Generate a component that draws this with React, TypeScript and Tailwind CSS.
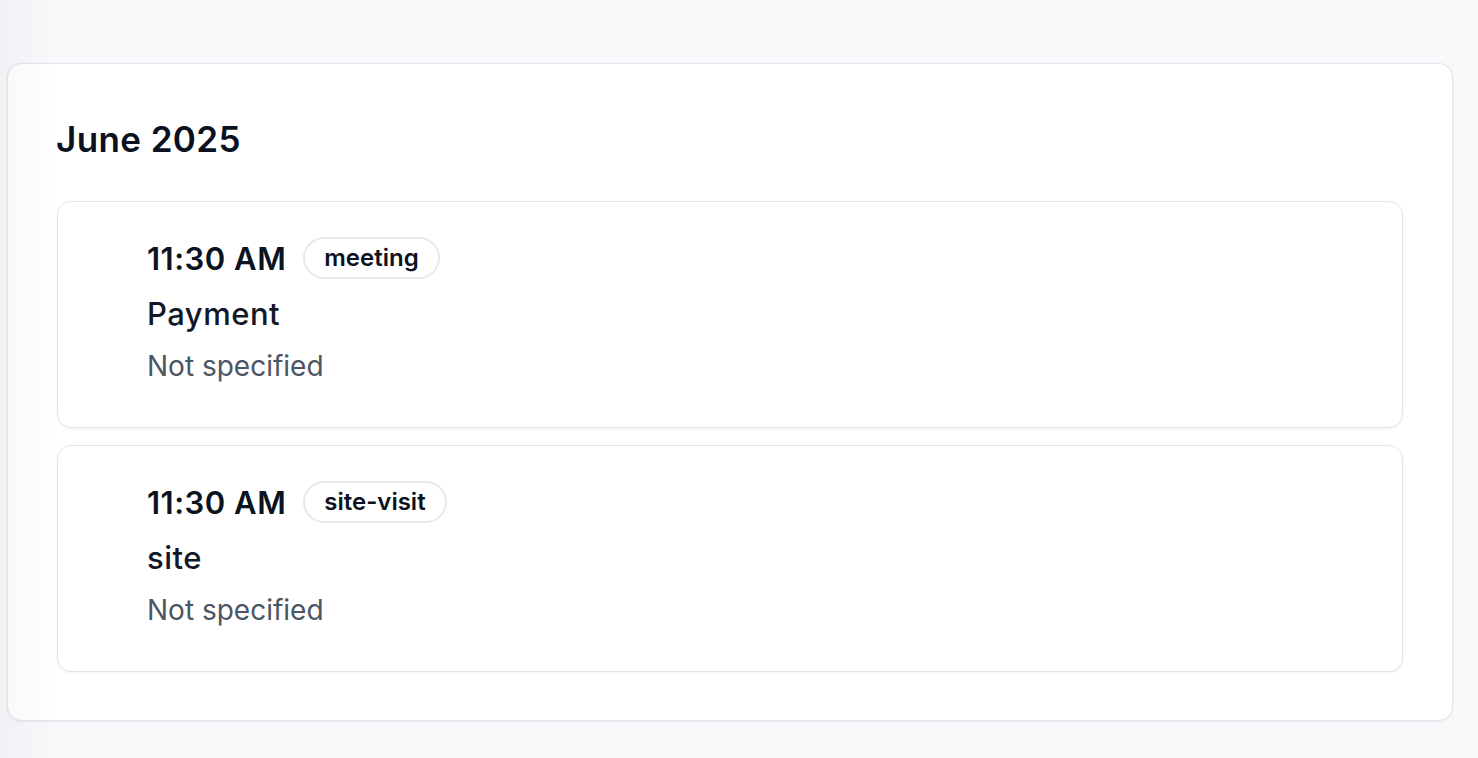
import React from "react";

type Ev = { time: string; tag: string; title: string; loc: string };

const events: Ev[] = [
  { time: "11:30 AM", tag: "meeting", title: "Payment", loc: "Not specified" },
  { time: "11:30 AM", tag: "site-visit", title: "site", loc: "Not specified" },
];

function EventCard({ ev }: { ev: Ev }) {
  return (
    <div className="rounded-[14px] border border-[#e2e6ec] bg-white shadow-[0_1px_3px_rgba(15,23,42,0.06)] pl-[89px] pr-6 pt-[35px] pb-[44px]">
      <div className="flex items-center gap-[17px] h-[42px]">
        <span className="text-[31px] font-semibold text-[#0b1220] leading-none tracking-[0.5px]">
          {ev.time}
        </span>
        <span className="h-[42px] flex items-center rounded-full border-2 border-[#e6e9ef] px-[19px] text-[24px] font-semibold text-[#0b1220] leading-none">
          {ev.tag}
        </span>
      </div>
      <div className="mt-[16px] text-[31px] font-medium text-[#111827] leading-[38px] tracking-[0.5px]">
        {ev.title}
      </div>
      <div className="mt-[16px] text-[28px] text-[#4b5563] leading-[34px]">
        {ev.loc}
      </div>
    </div>
  );
}

export default function App() {
  return (
    <div
      className="relative min-h-screen bg-[#f8f9fb] pt-[63px] pl-[7px] pr-[25px] pb-[38px]"
      style={{ fontFamily: "Inter, 'Noto Sans', sans-serif" }}
    >
      <div className="rounded-[14px] border border-[#e2e6ec] bg-white shadow-[0_1px_3px_rgba(15,23,42,0.06)] px-[49px] pt-[54px] pb-[48px]">
        <h2 className="text-[35px] font-semibold text-[#0b1120] leading-[42px] tracking-[0.4px] -ml-px mb-[41px]">
          June 2025
        </h2>
        <div className="flex flex-col gap-[17px]">
          {events.map((ev, i) => (
            <EventCard key={i} ev={ev} />
          ))}
        </div>
      </div>
      <div className="pointer-events-none absolute inset-y-0 left-0 w-[60px] bg-gradient-to-r from-[rgba(15,23,42,0.03)] to-transparent" />
    </div>
  );
}
